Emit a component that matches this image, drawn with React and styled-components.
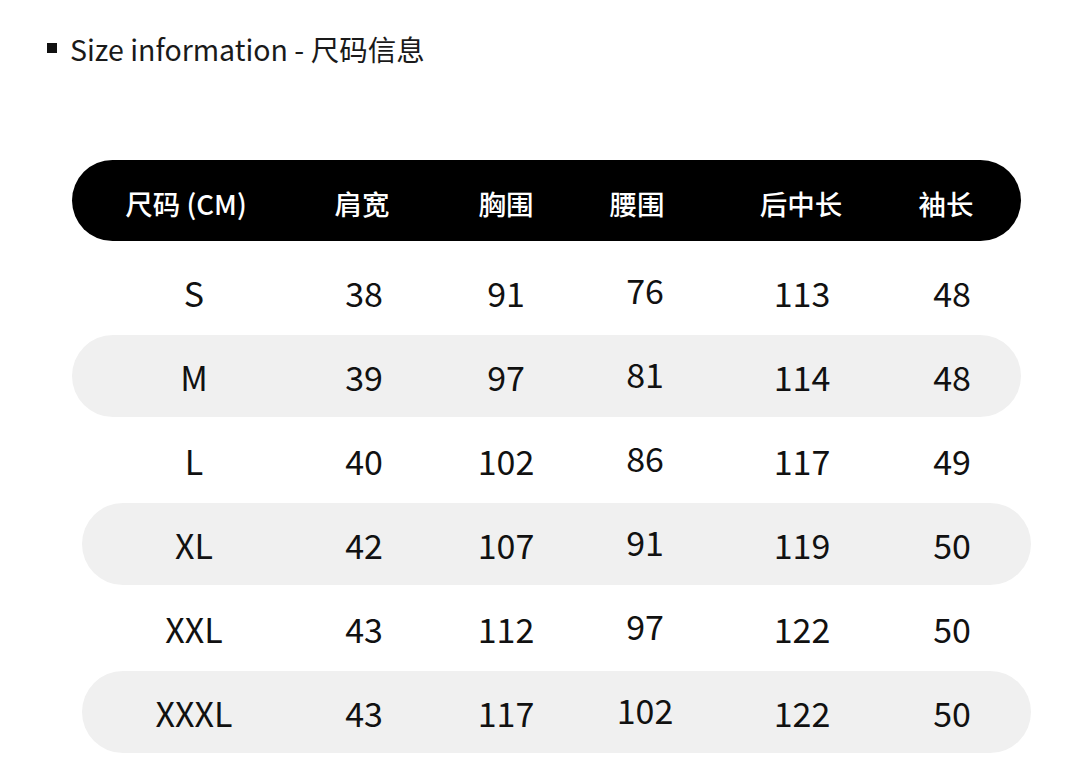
import React from "react";
import styled, { createGlobalStyle } from "styled-components";

const GlobalStyle = createGlobalStyle`
  html, body { margin: 0; padding: 0; background: #ffffff; }
  body { font-family: "Noto Sans CJK SC", "Noto Sans", sans-serif; }
`;

const HEADER_COLS = "228px 124px 164px 98px 230px 60px";
const DATA_COLS = "244px 96px 188px 90px 224px 76px";

const Page = styled.div`
  width: 1080px;
  height: 776px;
  overflow: hidden;
  padding-top: 28px;
  box-sizing: border-box;
`;

const Title = styled.h2`
  display: flex;
  align-items: center;
  gap: 13px;
  margin: 0 0 0 47px;
  height: 40px;
  font-size: 28.5px;
  font-weight: 400;
  color: #1a1a1a;
  letter-spacing: 0;
`;

const Bullet = styled.span`
  width: 10px;
  height: 10px;
  background: #111;
  flex: none;
`;

const Table = styled.div`
  margin: 92px 0 0 72px;
  width: 960px;
  display: flex;
  flex-direction: column;
`;

const HeaderBar = styled.div`
  display: grid;
  grid-template-columns: ${HEADER_COLS};
  align-items: center;
  width: 949px;
  height: 81px;
  background: #000;
  border-radius: 41px;
  margin-bottom: 9px;
`;

const HeadCell = styled.div`
  text-align: center;
  color: #fff;
  font-size: 27.5px;
  font-weight: 500;
  white-space: nowrap;
  padding-top: 4px;
`;

const Row = styled.div`
  position: relative;
  display: grid;
  grid-template-columns: ${DATA_COLS};
  align-items: center;
  height: 84px;
  &::before {
    content: "";
    position: absolute;
    top: 1px;
    bottom: 1px;
    left: ${(p) => p.$shift}px;
    width: 949px;
    border-radius: 41px;
    background: ${(p) => (p.$shaded ? "#f0f0f0" : "transparent")};
    z-index: 0;
  }
`;

const Cell = styled.div`
  position: relative;
  z-index: 1;
  text-align: center;
  font-size: 34px;
  font-weight: 400;
  color: #111;
  white-space: nowrap;
  padding-top: 0px;
  margin-bottom: ${(p) => (p.$raise ? 5 : 0)}px;
`;

const headers = ["尺码 (CM)", "肩宽", "胸围", "腰围", "后中长", "袖长"];

const rows = [
  ["S", "38", "91", "76", "113", "48"],
  ["M", "39", "97", "81", "114", "48"],
  ["L", "40", "102", "86", "117", "49"],
  ["XL", "42", "107", "91", "119", "50"],
  ["XXL", "43", "112", "97", "122", "50"],
  ["XXXL", "43", "117", "102", "122", "50"],
];

export default function App() {
  return (
    <Page>
      <GlobalStyle />
      <Title>
        <Bullet />
        Size information - 尺码信息
      </Title>
      <Table>
        <HeaderBar>
          {headers.map((h) => (
            <HeadCell key={h}>{h}</HeadCell>
          ))}
        </HeaderBar>
        {rows.map((r, i) => (
          <Row key={r[0]} $shaded={i % 2 === 1} $shift={i === 1 ? 0 : 10}>
            {r.map((v, j) => (
              <Cell key={j} $raise={j === 3}>
                {v}
              </Cell>
            ))}
          </Row>
        ))}
      </Table>
    </Page>
  );
}
